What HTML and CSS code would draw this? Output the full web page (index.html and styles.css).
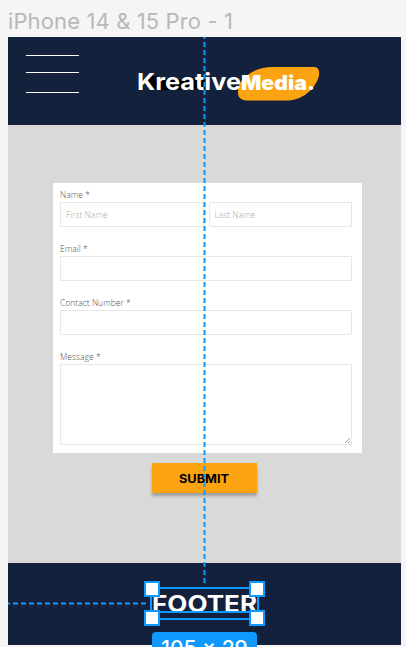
FILE: index.html
```html
<!DOCTYPE html>
<html lang="en">
<head>
<meta charset="utf-8">
<title>Contact</title>
<link rel="stylesheet" href="styles.css">
</head>
<body>
<div class="frame-label">iPhone 14 &amp; 15 Pro - 1</div>
<main class="frame">
  <header class="header">
    <div class="menu"><i></i><i></i><i></i></div>
    <svg class="logo" width="190" height="40" viewBox="0 0 190 40">
      <path class="blob" d="M100 31C99 17 115 5 135 5H176C182 5 182 12 180 17C175 29 163 38.500 149 38.500H110C104 38.500 100 36 100 31Z"/>
      <path class="ink" d="M9 21L14 14L20 14V28H14ZM20 17H67V28H20Z"/>
      <text class="brand" x="-1" y="28" textLength="104" lengthAdjust="spacingAndGlyphs">Kreative</text>
      <text class="brand media" x="103" y="28" textLength="74" lengthAdjust="spacingAndGlyphs">Media.</text>
    </svg>
  </header>
  <section class="content">
    <form class="form">
      <div class="field"><span class="label">Name *</span>
        <div class="row"><div class="box">First Name</div><div class="box">Last Name</div></div>
      </div>
      <div class="field"><span class="label">Email *</span><div class="box"></div></div>
      <div class="field"><span class="label">Contact Number *</span><div class="box"></div></div>
      <div class="field"><span class="label">Message *</span>
        <div class="box area"><svg class="grip" width="7" height="7"><path d="M1 6L6 1M4 6L6 4"/></svg></div>
      </div>
    </form>
    <div class="submit"><svg width="105" height="30"><text x="27" y="20" textLength="50" lengthAdjust="spacingAndGlyphs">SUBMIT</text></svg></div>
  </section>
  <footer class="footer">
    <svg width="105" height="29"><text x="0" y="23" textLength="105" lengthAdjust="spacingAndGlyphs">FOOTER</text></svg>
  </footer>
</main>
<div class="guide-v"></div>
<div class="guide-h"></div>
<div class="selection"><b></b><b></b><b></b><b></b></div>
<div class="size">105 × 29</div>
</body>
</html>
```
FILE: styles.css
```css
* { box-sizing: border-box; }
body { margin: 0; position: relative; height: 647px; overflow: hidden; background: #f5f5f5; }
svg { display: block; }
.frame-label { height: 37px; padding: 8px 0 0 8px; font: 22px/27px Inter, sans-serif; letter-spacing: .12px; color: #b8b8b8; white-space: nowrap; }
.frame { width: 393px; margin-left: 8px; }
.header { height: 88px; background: #14213d; display: flex; }
.menu { width: 53px; margin: 18px 0 0 18px; }
.menu i { display: block; height: 1px; background: #fff; }
.menu i:nth-child(2) { margin-top: 16px; }
.menu i:nth-child(3) { margin-top: 19px; }
.logo { margin: 25px 0 0 59px; overflow: visible; }
.blob { fill: #fca311; }
.ink { fill: #000; }
.brand { font: 700 23.500px Inter, sans-serif; fill: #fff; }
.media { font-weight: 900; font-size: 19.500px; }
.content { height: 438px; background: #d9d9d9; padding: 58px 0 0 45px; }
.form { width: 309px; height: 270px; padding: 5px 10px 0 7px; background: #fff; }
.field { height: 54px; font: 300 8.500px/14px "Open Sans", sans-serif; color: #555; }
.label { display: block; height: 14px; letter-spacing: .03px; }
.row { display: flex; gap: 5px; }
.row .box { flex: 1; }
.box { position: relative; height: 25px; border: 1px solid #e7e7e7; border-radius: 1px; padding: 5px; color: #aaa; }
.area { height: 81px; }
.grip { position: absolute; right: 0; bottom: 0; stroke: #888; stroke-width: .8; }
.submit { width: 105px; height: 30px; margin: 10px 0 0 99px; background: #fca311; box-shadow: 0 3px 3px rgba(0,0,0,.28); }
.submit text { font: 700 12px Inter, sans-serif; fill: #000; }
.footer { height: 82px; padding: 26px 0 0 144px; background: #14213d; }
.footer text { font: 700 23px Inter, sans-serif; fill: #fff; }
.guide-v { position: absolute; left: 203px; top: 37px; width: 3px; height: 547px;
  background: linear-gradient(90deg, rgba(13,153,255,.5) 1px, #0d99ff 1px 2px, rgba(13,153,255,.5) 2px);
  -webkit-mask: repeating-linear-gradient(#000 0 2px, transparent 2px 5px, #000 5px 8px); }
.guide-h { position: absolute; left: 8px; top: 602px; width: 139px; height: 3px;
  background: linear-gradient(rgba(13,153,255,.5) 1px, #0d99ff 1px 2px, rgba(13,153,255,.5) 2px);
  -webkit-mask: repeating-linear-gradient(90deg, #000 0 2px, transparent 2px 5px, #000 5px 8px); }
.selection { position: absolute; left: 150px; top: 587px; width: 109px; height: 33px; border: 2px solid #0d99ff; }
.selection::after { content: ""; position: absolute; left: 2px; right: 2px; top: 22px; height: 2px; background: #0d99ff; }
.selection b { position: absolute; z-index: 1; width: 16px; height: 16px; background: #fff; border: 2px solid #0d99ff; }
.selection b:nth-child(odd) { left: -8px; }
.selection b:nth-child(even) { right: -8px; }
.selection b:nth-child(-n+2) { top: -8px; }
.selection b:nth-child(n+3) { bottom: -8px; }
.size { position: absolute; left: 152px; top: 632px; width: 105px; height: 32px; border-radius: 4px; background: #0d99ff; color: #fff; font: 500 21px/34px Inter, sans-serif; text-align: center; white-space: nowrap; }
```
